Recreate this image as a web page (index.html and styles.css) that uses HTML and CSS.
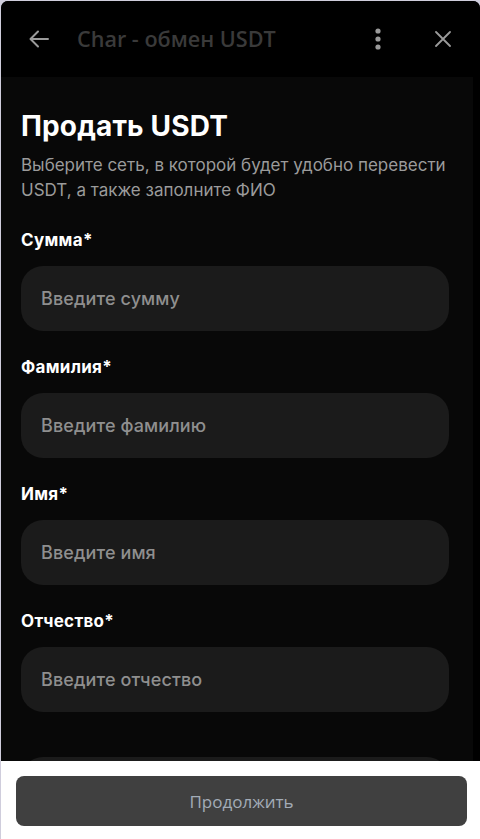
FILE: index.html
```html
<!DOCTYPE html>
<html lang="ru">
<head>
<meta charset="utf-8">
<title>Char - обмен USDT</title>
<link rel="stylesheet" href="styles.css">
</head>
<body>
<div class="window">
  <header class="topbar">
    <button class="icon-btn back" aria-label="Назад">
      <svg width="22" height="22" viewBox="0 0 22 22" fill="none" stroke="#9a9a9a" stroke-width="2" stroke-linecap="round" stroke-linejoin="round"><path d="M20 11H2.5M10 3.5L2.5 11L10 18.5"/></svg>
    </button>
    <div class="title">Char - обмен USDT</div>
    <button class="icon-btn more" aria-label="Меню">
      <svg width="6" height="22" viewBox="0 0 6 22" fill="#9a9a9a"><circle cx="3" cy="3" r="2.6"/><circle cx="3" cy="11" r="2.6"/><circle cx="3" cy="19" r="2.6"/></svg>
    </button>
    <button class="icon-btn close" aria-label="Закрыть">
      <svg width="16" height="16" viewBox="0 0 16 16" fill="none" stroke="#9a9a9a" stroke-width="1.8" stroke-linecap="round"><path d="M1 1L15 15M15 1L1 15"/></svg>
    </button>
  </header>
  <main class="content">
    <h1 class="heading">Продать USDT</h1>
    <p class="subtitle">Выберите сеть, в которой будет удобно перевести USDT, а также заполните ФИО</p>
    <div class="field">
      <label class="label">Сумма*</label>
      <div class="input">Введите сумму</div>
    </div>
    <div class="field">
      <label class="label">Фамилия*</label>
      <div class="input">Введите фамилию</div>
    </div>
    <div class="field">
      <label class="label">Имя*</label>
      <div class="input">Введите имя</div>
    </div>
    <div class="field">
      <label class="label">Отчество*</label>
      <div class="input">Введите отчество</div>
    </div>
    <div class="field extra">
      <div class="input"></div>
    </div>
  </main>
  <footer class="footer">
    <button class="continue">Продолжить</button>
  </footer>
</div>
</body>
</html>
```
FILE: styles.css
```css
* { box-sizing: border-box; }
html, body { margin: 0; padding: 0; }
body {
  background: #cfcddc;
  width: 480px;
  height: 839px;
  overflow: hidden;
  padding: 1px 0 0 1px;
}
.window {
  width: 479px;
  height: 838px;
  background: #000;
  border-radius: 7px 7px 0 0;
  overflow: hidden;
  display: flex;
  flex-direction: column;
}
.topbar {
  height: 76px;
  flex: none;
  background: #000;
  display: flex;
  align-items: center;
  padding: 0 0 0 26px;
}
.icon-btn {
  background: none;
  border: 0;
  padding: 0;
  display: flex;
  align-items: center;
  justify-content: center;
  cursor: pointer;
}
.back { width: 24px; height: 24px; }
.title {
  font-family: "Open Sans", sans-serif;
  font-weight: 600;
  font-size: 21.6px;
  color: #3a3a3a;
  margin-left: 26px;
  flex: 1;
  padding-bottom: 2px;
}
.more { width: 10px; height: 24px; margin-right: 51px; }
.close { width: 18px; height: 18px; margin-right: 28px; }
.content {
  flex: 1;
  background: #080808;
  overflow: hidden;
  padding: 31px 24px 0 20px;
  font-family: Inter, "Noto Sans", sans-serif;
  margin-right: 7px;
}
.heading {
  margin: 0;
  font-size: 28px;
  font-weight: 700;
  color: #fff;
  line-height: 36px;
  letter-spacing: 0.15px;
}
.subtitle {
  margin: 9px -12px 0 0;
  font-size: 17px;
  line-height: 25px;
  color: #9b9b9b;
  letter-spacing: 0;
}
.field { margin-top: 25px; }
.field + .field { margin-top: 24px; }
.label {
  display: block;
  font-size: 17px;
  font-weight: 700;
  color: #fff;
  line-height: 24px;
  letter-spacing: 0.3px;
}
.input {
  margin-top: 14px;
  height: 65px;
  border-radius: 22px;
  background: #1b1b1b;
  display: flex;
  align-items: center;
  padding: 0 20px;
  font-size: 18px;
  font-weight: 500;
  color: #8f8f8f;
  letter-spacing: 0.1px;
}
.extra { margin-top: 45px !important; }
.footer {
  height: 78px;
  flex: none;
  background: #fff;
  padding: 15px 13px 0 15px;
}
.continue {
  width: 100%;
  height: 50px;
  border: 0;
  border-radius: 8px;
  background: #404040;
  color: #a3acb7;
  font-family: "Open Sans", sans-serif;
  font-size: 17px;
  font-weight: 500;
}
```
